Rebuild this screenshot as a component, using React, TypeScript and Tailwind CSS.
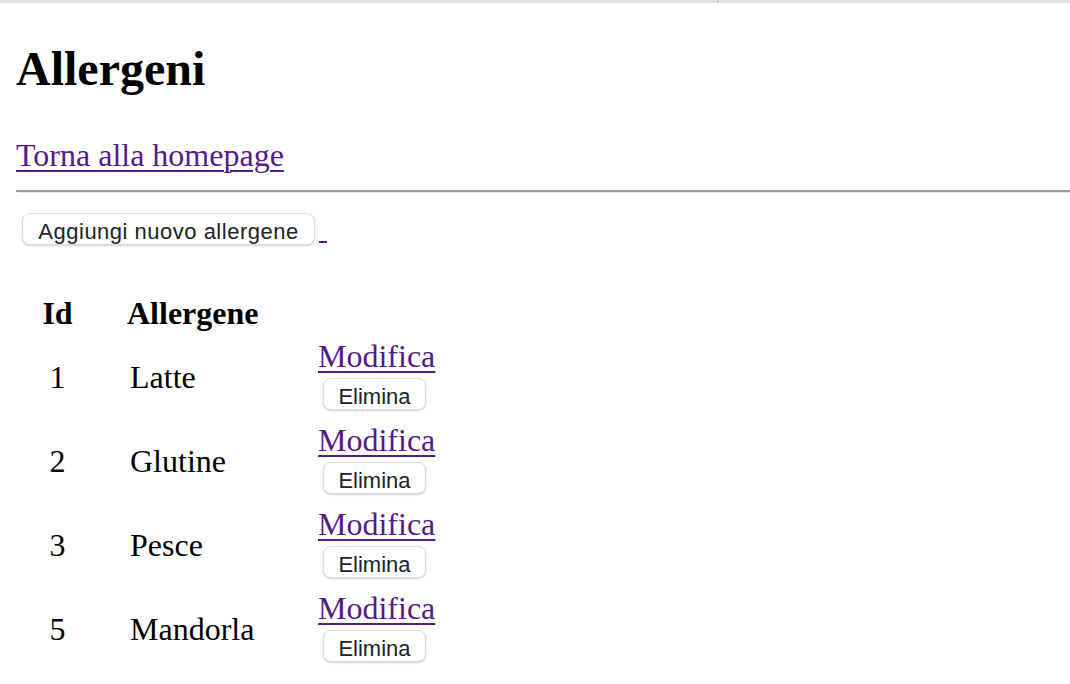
import React from 'react';

interface Allergene {
  id: number;
  nome: string;
}

const allergeni: Allergene[] = [
  { id: 1, nome: 'Latte' },
  { id: 2, nome: 'Glutine' },
  { id: 3, nome: 'Pesce' },
  { id: 5, nome: 'Mandorla' },
];

const serif = "font-['Liberation_Serif','Times_New_Roman',serif]";
const sans = "font-['Liberation_Sans',Arial,sans-serif]";

const SafariButton = ({ children, className = '' }: { children: React.ReactNode; className?: string }) => (
  <button
    type="button"
    className={`${sans} box-border h-[32px] pt-[6px] pb-0 text-[22px] leading-[24px] text-[#222] bg-white border border-[#dcdcdc] rounded-[8px] shadow-[0_1px_2px_rgba(0,0,0,0.18)] text-center ${className}`}
  >
    {children}
  </button>
);

export default function App() {
  return (
    <div className={`${serif} min-h-[684px] bg-white text-black`}>
      {/* barra in alto */}
      <div className="flex h-[3px]">
        <div className="w-[717px] bg-[#e4e1e6]" />
        <div className="w-[2px] bg-[#cfccd2]" />
        <div className="flex-1 bg-[#e4e1e6]" />
      </div>

      <div className="pl-4">
        <h1 className="mt-[42px] text-[48px] leading-[48px] font-bold">Allergeni</h1>

        <div className="mt-[44px] text-[32px] leading-[36px]">
          <a href="#" className="text-[#551a8b] underline underline-offset-[4px] decoration-[2px]">
            Torna alla homepage
          </a>
        </div>

        <div className="mt-[17px]">
          <div className="h-[2px] bg-[#9b9b9b]" />
          <div className="h-[1px] ml-[2px] bg-[#e6e6e6]" />
        </div>

        <div className="mt-[20px] flex">
          <SafariButton className="ml-[6px] w-[293px] tracking-[0.5px]">Aggiungi nuovo allergene</SafariButton>
          <div className="ml-[4px] mt-[28px] w-[8px] h-[2px] bg-[#551a8b]" />
        </div>

        {/* tabella */}
        <div className="mt-[50px] flex text-[32px] leading-[36px] font-bold">
          <div className="w-[83px] text-center">Id</div>
          <div className="w-[219px] pl-[28px]">Allergene</div>
        </div>

        <div className="mt-[3px]">
          {allergeni.map((a) => (
            <div key={a.id} className="flex items-center h-[84px] text-[32px] leading-[36px]">
              <div className="w-[83px] pt-[2px] text-center">{a.id}</div>
              <div className="w-[219px] pt-[2px] pl-[31px]">{a.nome}</div>
              <div className="flex flex-col items-start self-start pt-[4px]">
                <a href="#" className="text-[#551a8b] underline underline-offset-[4px] decoration-[2px]">
                  Modifica
                </a>
                <SafariButton className="mt-[4px] ml-[5px] w-[103px]">Elimina</SafariButton>
              </div>
            </div>
          ))}
        </div>
      </div>
    </div>
  );
}
